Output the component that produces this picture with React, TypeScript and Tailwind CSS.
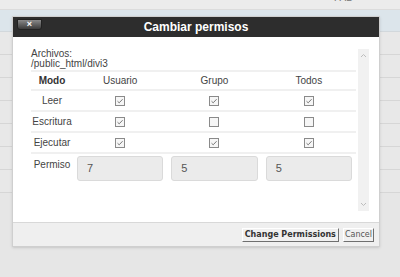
const rows = [
  { label: 'Leer', checks: [true, true, true] },
  { label: 'Escritura', checks: [true, false, false] },
  { label: 'Ejecutar', checks: [true, true, true] },
]

const perms = ['7', '5', '5']

function Check({ on }: { on: boolean }) {
  return (
    <div className="flex h-[10px] w-[10px] items-center justify-center border border-[#8a8a8a] bg-[#f6f6f6]">
      {on && (
        <svg width="8" height="8" viewBox="0 0 8 8" fill="none">
          <path d="M1.5 4.2 L3.2 5.8 L6.6 2.2" stroke="#6a6a6a" strokeWidth="0.9" />
        </svg>
      )}
    </div>
  )
}

function BgRows() {
  return (
    <div className="flex flex-col">
      <div className="h-[10px] overflow-hidden bg-[#ececec] border-b border-[#dcdcdc]">
        <div className="ml-[334px] -mt-[7px] text-[10px] leading-[10px] text-[#777]">FAB</div>
      </div>
      <div className="h-[22px] bg-[#dce5eb] border-b border-[#d2d8dc]" />
      {Array.from({ length: 7 }).map((_, i) => (
        <div key={i} className="h-[23px] border-b border-[#d6d6d6] bg-[#e8e8e8]" />
      ))}
    </div>
  )
}

export default function App() {
  return (
    <div
      className="relative h-[277px] w-[400px] overflow-hidden bg-[#e6e6e6]"
      style={{ fontFamily: '"Liberation Sans", Arial, sans-serif' }}
    >
      <BgRows />

      <div className="absolute left-[12px] top-[16px] flex w-[368px] flex-col border border-[#cfcfcf] bg-white shadow-sm">
        {/* header */}
        <div className="relative flex h-[20px] items-center justify-center bg-[#2d2d2d]">
          <button className="absolute left-[4px] top-[2px] flex h-[11px] w-[25px] items-center justify-center rounded-b-[3px] border border-[#222] bg-gradient-to-b from-[#8a8a8a] to-[#3c3c3c] text-[9px] font-bold leading-none text-white">
            ×
          </button>
          <span className="text-[12px] font-bold text-white">Cambiar permisos</span>
        </div>

        {/* body */}
        <div className="flex h-[185px] pl-[18px] pr-[10px] pt-[12px]">
          <div className="flex-1 text-[10px] text-[#444]">
            <div className="border-b-2 border-[#f0f0f0] pb-[1px] leading-[10px]">
              <div>Archivos:</div>
              <div>/public_html/divi3</div>
            </div>

            <div className="grid h-[19px] grid-cols-[42px_1fr_1fr_1fr] items-center border-b-2 border-[#f0f0f0]">
              <div className="text-center font-bold text-[#333]">Modo</div>
              <div className="text-center">Usuario</div>
              <div className="text-center">Grupo</div>
              <div className="text-center">Todos</div>
            </div>

            {rows.map(r => (
              <div key={r.label} className="grid h-[21px] grid-cols-[42px_1fr_1fr_1fr] items-center border-b-2 border-[#f0f0f0]">
                <div className="text-center">{r.label}</div>
                {r.checks.map((c, i) => (
                  <div key={i} className="flex justify-center">
                    <Check on={c} />
                  </div>
                ))}
              </div>
            ))}

            <div className="grid grid-cols-[42px_1fr_1fr_1fr] pt-[2px]">
              <div className="pt-[1px] text-center">Permiso</div>
              {perms.map((p, i) => (
                <div key={i} className="px-[4px]">
                  <div className="flex h-[25px] items-center rounded-[3px] border border-[#dadada] bg-[#ebebeb] pl-[9px] text-[11px] text-[#555]">
                    {p}
                  </div>
                </div>
              ))}
            </div>
          </div>

          <div className="ml-[2px] flex h-[162px] w-[11px] flex-col items-center justify-between bg-[#f1f1f1] py-[4px]">
            <svg width="7" height="5" viewBox="0 0 7 5" fill="none">
              <path d="M1 4 L3.5 1.5 L6 4" stroke="#bdbdbd" strokeWidth="1" />
            </svg>
            <svg width="7" height="5" viewBox="0 0 7 5" fill="none">
              <path d="M1 1 L3.5 3.5 L6 1" stroke="#bdbdbd" strokeWidth="1" />
            </svg>
          </div>
        </div>

        {/* footer */}
        <div
          className="flex h-[24px] items-center justify-end gap-[4px] border-t border-[#d8d8d8] bg-[#efefef] pr-[5px]"
          style={{ fontFamily: '"DejaVu Sans", Verdana, sans-serif' }}
        >
          <button className="h-[14px] border border-t-white border-l-white border-r-[#6f6f6f] border-b-[#6f6f6f] bg-[#f0f0f0] px-[2px] text-[8px] font-bold leading-none text-[#333]">
            Change Permissions
          </button>
          <button className="h-[14px] border border-t-white border-l-white border-r-[#6f6f6f] border-b-[#6f6f6f] bg-[#f0f0f0] px-[1px] text-[8px] leading-none text-[#555]">
            Cancel
          </button>
        </div>
      </div>
    </div>
  )
}
